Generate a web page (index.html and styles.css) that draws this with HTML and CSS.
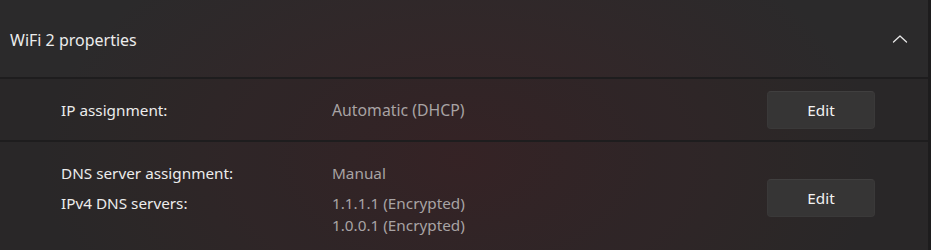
FILE: index.html
```html
<!DOCTYPE html>
<html>
<head>
<meta charset="utf-8">
<link rel="stylesheet" href="styles.css">
</head>
<body>
<div class="card">
  <div class="header">
    <span class="title">WiFi 2 properties</span>
    <svg class="chev" width="16" height="10" viewBox="0 0 16 10"><path d="M1.5 8 L8 2 L14.5 8" fill="none" stroke="#e8e8e8" stroke-width="1.3" stroke-linecap="round" stroke-linejoin="round"/></svg>
  </div>
  <div class="row row-ip">
    <div class="labels"><div>IP assignment:</div></div>
    <div class="values"><div>Automatic (DHCP)</div></div>
    <button class="btn">Edit</button>
  </div>
  <div class="row row-dns">
    <div class="labels"><div>DNS server assignment:</div><div>IPv4 DNS servers:</div></div>
    <div class="values"><div>Manual</div><div>1.1.1.1 (Encrypted)</div><div>1.0.0.1 (Encrypted)</div></div>
    <button class="btn">Edit</button>
  </div>
</div>
</body>
</html>
```

FILE: styles.css
```css
html, body {
  margin: 0;
  padding: 0;
  width: 931px;
  height: 250px;
  overflow: hidden;
  background: #1c1b1c;
  font-family: "Noto Sans", "Open Sans", sans-serif;
  color: #f2f2f2;
}
.card {
  width: 928px;
  height: 250px;
  border-right: 3px solid #1d1c1d;
  background:
    radial-gradient(ellipse 420px 260px at 460px 160px, rgba(72, 30, 34, 0.45), rgba(72, 30, 34, 0) 100%),
    #2b2a2b;
  display: flex;
  flex-direction: column;
}
.header {
  height: 77px;
  border-bottom: 2px solid #1e1d1e;
  display: flex;
  align-items: center;
  justify-content: space-between;
  padding: 0 20px 0 10px;
  box-sizing: content-box;
}
.title {
  font-size: 16px;
  color: #ececec;
  position: relative;
  top: 1px;
}
.chev { display: block; }
.row {
  display: flex;
  align-items: center;
  padding-left: 61px;
  padding-right: 53px;
  font-size: 15.3px;
  background: rgba(30, 22, 24, 0.12);
}
.row-ip {
  height: 61px;
  border-bottom: 2px solid #1e1d1e;
}
.row-dns {
  flex: 1;
  align-items: flex-start;
  padding-top: 21px;
}
.labels {
  width: 271px;
  color: #ececec;
  display: flex;
  flex-direction: column;
  gap: 10px;
}
.values {
  flex: 1;
  color: #a8a3a4;
  display: flex;
  flex-direction: column;
}
.row-ip .values { font-size: 15.8px; }
.row-dns .values div:nth-child(2) { margin-top: 10px; }
.row-dns .values div:nth-child(3) { margin-top: 2px; }
.row-ip .labels, .row-ip .values { margin-top: 1px; }
.btn {
  width: 108px;
  height: 38px;
  border-radius: 4px;
  border: 1px solid #3a3939;
  border-top-color: #403f3f;
  background: #363535;
  color: #f2f2f2;
  font-family: inherit;
  font-size: 15.3px;
  padding: 0;
}
.row-dns .btn { margin-top: 16px; }
```
